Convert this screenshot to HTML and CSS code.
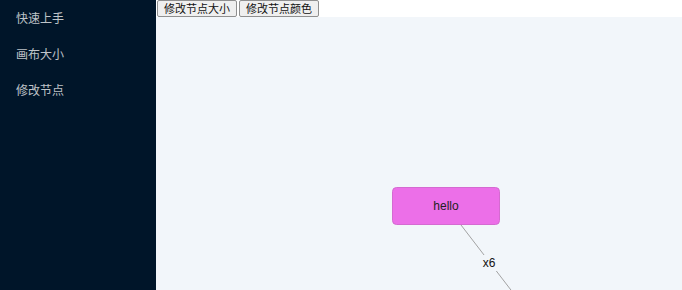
FILE: index.html
```html
<!DOCTYPE html>
<html lang="zh">
<head>
<meta charset="UTF-8">
<meta name="viewport" content="width=device-width, initial-scale=1.0">
<title>X6 Demo</title>
<link rel="stylesheet" href="styles.css">
</head>
<body>
<div class="layout">
  <div class="sider">
    <div class="menu-item">快速上手</div>
    <div class="menu-item">画布大小</div>
    <div class="menu-item">修改节点</div>
  </div>
  <div class="main">
    <div class="toolbar">
      <button class="btn">修改节点大小</button>
      <button class="btn">修改节点颜色</button>
    </div>
    <div class="canvas">
      <svg class="graph" width="526" height="273">
        <line x1="305" y1="208" x2="358" y2="277" stroke="#a2a2a2" stroke-width="1"/>
        <rect x="325" y="238" width="16" height="16" fill="#f2f6fa"/>
        <text x="333" y="250" text-anchor="middle" class="edge-label">x6</text>
        <rect x="236.5" y="170.5" width="107" height="37" rx="4" fill="#ec6fe8" stroke="#d56ad1" stroke-width="1"/>
        <text x="290" y="193" text-anchor="middle" class="node-label">hello</text>
      </svg>
    </div>
  </div>
</div>
</body>
</html>
```

FILE: styles.css
```css
body {
  margin: 0;
  font-family: "Noto Sans CJK SC", "Liberation Sans", sans-serif;
}
.layout {
  display: flex;
  height: 100vh;
}
.sider {
  width: 156px;
  background: #001529;
  padding-top: 9px;
  flex-shrink: 0;
}
.menu-item {
  height: 36px;
  line-height: 18px;
  padding-left: 16px;
  font-size: 12px;
  color: rgba(255, 255, 255, 0.75);
}
.main {
  flex: 1;
  display: flex;
  flex-direction: column;
}
.toolbar {
  display: flex;
  gap: 2px;
  padding-left: 1px;
  background: #fff;
}
.btn {
  font-family: "Noto Sans CJK SC", sans-serif;
  font-size: 11px;
  line-height: 13px;
  padding: 1px 6px;
  margin: 0;
  height: 17px;
  background: #efefef;
  border: 1px solid #8f8f8f;
  border-radius: 2px;
  color: #111;
}
.canvas {
  flex: 1;
  position: relative;
  background: #f2f6fa;
  overflow: hidden;
}
.graph {
  position: absolute;
  left: 0;
  top: 0;
}
.node-label {
  font-family: "Liberation Sans", sans-serif;
  font-size: 12px;
  fill: #222;
}
.edge-label {
  font-family: "Liberation Sans", sans-serif;
  font-size: 12px;
  fill: #111;
}
```
